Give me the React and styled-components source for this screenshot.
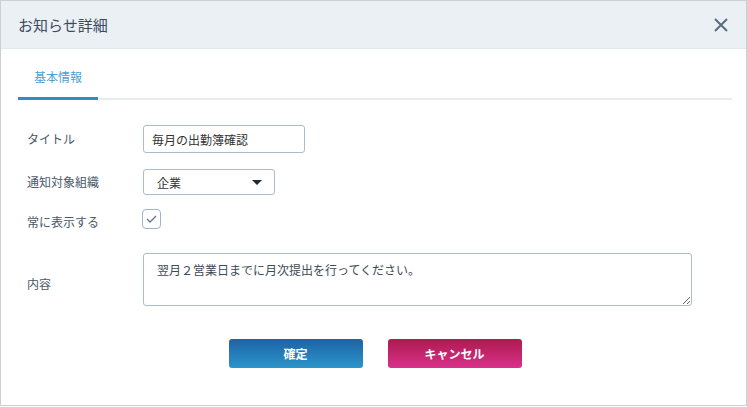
import React from "react";
import styled, { createGlobalStyle } from "styled-components";

const Global = createGlobalStyle`
  html, body { margin: 0; padding: 0; background: #fff; }
  body { font-family: "Noto Sans CJK JP", "Noto Sans", sans-serif; }
  * { box-sizing: border-box; }
`;

const Frame = styled.div`
  width: 747px;
  height: 406px;
  border: 1px solid #cdcfd2;
  background: #fff;
  display: flex;
  flex-direction: column;
`;

const Header = styled.div`
  height: 48px;
  background: #ebf0f5;
  display: flex;
  align-items: center;
  justify-content: space-between;
  padding: 0 16px 0 17px;
  border-bottom: 1px solid #e3e8ee;
`;

const Title = styled.div`
  font-size: 15px;
  color: #3b4a5d;
  line-height: 1;
`;

const CloseButton = styled.button`
  border: none;
  background: none;
  padding: 0;
  width: 18px;
  height: 18px;
  display: flex;
  align-items: center;
  justify-content: center;
  cursor: pointer;
`;

const TabBar = styled.div`
  display: flex;
  margin: 0 14px 0 17px;
  border-bottom: 2px solid #e7ecf1;
`;

const Tab = styled.div`
  width: 80px;
  text-align: center;
  font-size: 12px;
  line-height: 16px;
  padding: 20px 0 12px;
  color: ${(p) => (p.$active ? "#4b9fd3" : "#677")};
  border-bottom: 3px solid ${(p) => (p.$active ? "#2f8ccb" : "transparent")};
  margin-bottom: -2px;
`;

const Form = styled.div`
  display: flex;
  flex-direction: column;
  padding: 25px 0 0 26px;
`;

const Row = styled.div`
  display: flex;
  align-items: center;
  margin-top: ${(p) => p.$mt || 0}px;
  min-height: ${(p) => p.$h || 0}px;
`;

const Label = styled.div`
  width: 116px;
  font-size: 12px;
  color: #4a5868;
  line-height: 16px;
  padding-top: ${(p) => p.$offset || 0}px;
`;

const TextInput = styled.input`
  width: 162px;
  height: 28px;
  border: 1px solid #a9bdce;
  border-radius: 3px;
  padding: 0 8px;
  font-family: inherit;
  font-size: 12px;
  color: #333;
  outline: none;
`;

const Select = styled.div`
  width: 132px;
  height: 26px;
  border: 1px solid #a9bdce;
  border-radius: 3px;
  padding: 0 12px 0 13px;
  display: flex;
  align-items: center;
  justify-content: space-between;
  font-size: 12px;
  color: #333;
`;

const Caret = styled.span`
  width: 0;
  height: 0;
  border-left: 5px solid transparent;
  border-right: 5px solid transparent;
  border-top: 5px solid #1d2a38;
`;

const CheckBox = styled.div`
  width: 19px;
  height: 20px;
  margin-left: -1px;
  border: 1px solid #9fb4c7;
  border-radius: 4px;
  display: flex;
  align-items: center;
  justify-content: center;
`;

const TextArea = styled.textarea`
  width: 549px;
  height: 53px;
  border: 1px solid #a9bdce;
  border-radius: 3px;
  padding: 8px 13px;
  font-family: inherit;
  font-size: 12px;
  line-height: 16px;
  color: #404a55;
  outline: none;
`;

const Buttons = styled.div`
  display: flex;
  justify-content: center;
  gap: 25px;
  margin-top: 33px;
  padding-left: 3px;
`;

const Button = styled.button`
  width: 134px;
  height: 29px;
  border: none;
  border-radius: 3px;
  color: #fff;
  font-family: inherit;
  font-size: 12px;
  font-weight: bold;
  cursor: pointer;
  background: ${(p) =>
    p.$variant === "cancel"
      ? "linear-gradient(#ae1a4f, #d8318a)"
      : "linear-gradient(#1d62a7, #2b96c9)"};
`;

export default function App() {
  return (
    <>
      <Global />
      <Frame>
        <Header>
          <Title>お知らせ詳細</Title>
          <CloseButton aria-label="close">
            <svg width="14" height="14" viewBox="0 0 14 14">
              <path d="M1 1L13 13M13 1L1 13" stroke="#5b6b80" strokeWidth="2" />
            </svg>
          </CloseButton>
        </Header>
        <TabBar>
          <Tab $active>基本情報</Tab>
        </TabBar>
        <Form>
          <Row $h={28}>
            <Label>タイトル</Label>
            <TextInput defaultValue="毎月の出勤簿確認" />
          </Row>
          <Row $mt={16} $h={26}>
            <Label>通知対象組織</Label>
            <Select>
              <span>企業</span>
              <Caret />
            </Select>
          </Row>
          <Row $mt={13} $h={20}>
            <Label $offset={6}>常に表示する</Label>
            <CheckBox>
              <svg width="11" height="8" viewBox="0 0 11 8">
                <path d="M1 4L4 7L10 1" fill="none" stroke="#5c7892" strokeWidth="1.3" />
              </svg>
            </CheckBox>
          </Row>
          <Row $mt={23} $h={53}>
            <Label $offset={8}>内容</Label>
            <TextArea defaultValue="翌月２営業日までに月次提出を行ってください。" />
          </Row>
        </Form>
        <Buttons>
          <Button>確定</Button>
          <Button $variant="cancel">キャンセル</Button>
        </Buttons>
      </Frame>
    </>
  );
}
